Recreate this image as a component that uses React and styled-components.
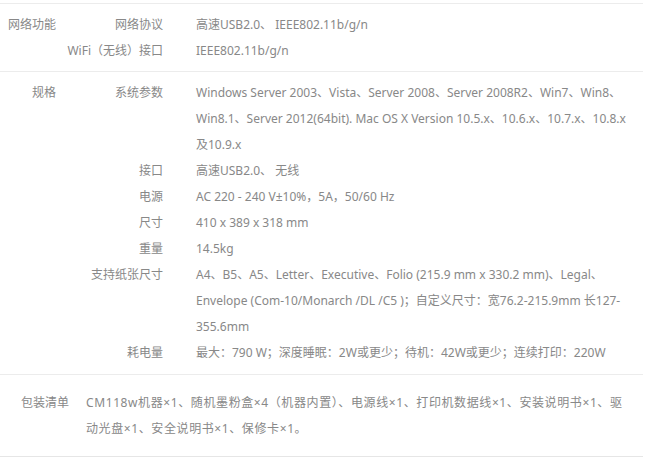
import React from "react";
import styled, { createGlobalStyle } from "styled-components";

const GlobalStyle = createGlobalStyle`
  body {
    margin: 0;
    background: #fff;
    font-family: "Noto Sans", "Noto Sans CJK SC", sans-serif;
    font-size: 12px;
    color: #888;
  }
`;

const Keep = styled.span`
  white-space: nowrap;
`;

const specs = [
  {
    title: "网络功能",
    rows: [
      ["网络协议", "高速USB2.0、 IEEE802.11b/g/n"],
      ["WiFi（无线）接口", "IEEE802.11b/g/n"]
    ]
  },
  {
    title: "规格",
    rows: [
      [
        "系统参数",
        <>
          Windows Server 2003、Vista、Server 2008、Server 2008R2、Win7、Win8、Win8.1、Server 2012(64bit). Mac OS X Version 10.5.x、10.6.x、10.7.x、10.8.x
          <Keep>及10.9.x</Keep>
        </>
      ],
      ["接口", "高速USB2.0、 无线"],
      ["电源", "AC 220 - 240 V±10%，5A，50/60 Hz"],
      ["尺寸", "410 x 389 x 318 mm"],
      ["重量", "14.5kg"],
      [
        "支持纸张尺寸",
        "A4、B5、A5、Letter、Executive、Folio (215.9 mm x 330.2 mm)、Legal、Envelope (Com-10/Monarch /DL /C5 )；自定义尺寸：宽76.2-215.9mm 长127-355.6mm"
      ],
      ["耗电量", "最大：790 W；深度睡眠：2W或更少；待机：42W或更少；连续打印：220W"]
    ]
  }
];

const Wrapper = styled.div`
  width: 643px;
  padding-top: 3px;
  line-height: 26px;
`;

const Section = styled.div`
  display: flex;
  border-top: 1px solid #ececec;
  padding: 8px 0 ${(p) => (p.$last ? 8 : 7)}px;
`;

const SectionTitle = styled.div`
  width: 56px;
  flex-shrink: 0;
  text-align: right;
`;

const RowList = styled.div`
  flex: 1;
  display: flex;
  flex-direction: column;
`;

const Row = styled.div`
  display: grid;
  grid-template-columns: 107px 1fr;
  column-gap: 33px;
`;

const RowLabel = styled.div`
  text-align: right;
  white-space: nowrap;
`;

const RowValue = styled.div`
  word-break: break-word;
`;

const Package = styled.div`
  display: flex;
  gap: 17px;
  border-top: 1px solid #ececec;
  border-bottom: 1px solid #e6e6e6;
  padding: 15px 16px 14px 21px;
`;

const PackageTitle = styled.div`
  flex-shrink: 0;
`;

const PackageText = styled.div`
  flex: 1;
  letter-spacing: 0.6px;
`;

export default function App() {
  return (
    <>
      <GlobalStyle />
      <Wrapper>
        {specs.map((s, i) => (
          <Section key={s.title} $last={i === specs.length - 1}>
            <SectionTitle>{s.title}</SectionTitle>
            <RowList>
              {s.rows.map(([label, value]) => (
                <Row key={label}>
                  <RowLabel>{label}</RowLabel>
                  <RowValue>{value}</RowValue>
                </Row>
              ))}
            </RowList>
          </Section>
        ))}
        <Package>
          <PackageTitle>包装清单</PackageTitle>
          <PackageText>
            CM118w机器×1、随机墨粉盒×4（机器内置）、电源线×1、打印机数据线×1、安装说明书×1、驱动光盘×1、安全说明书×1、保修卡×1。
          </PackageText>
        </Package>
      </Wrapper>
    </>
  );
}
